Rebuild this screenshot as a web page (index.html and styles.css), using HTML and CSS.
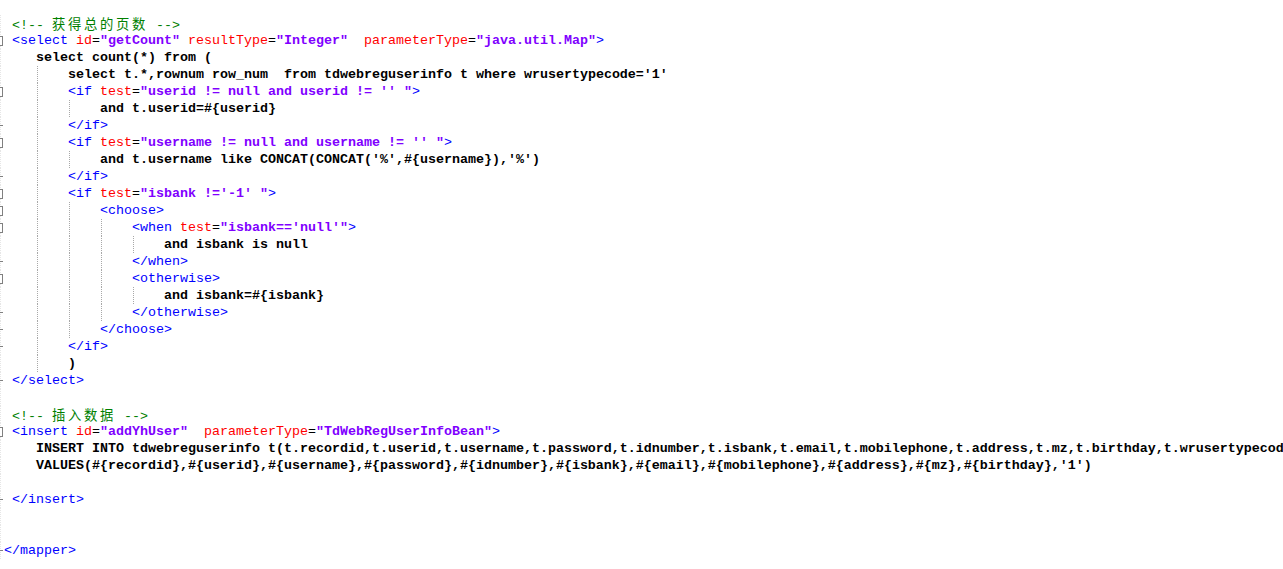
FILE: index.html
```html
<!DOCTYPE html>
<html>
<head>
<meta charset="utf-8">
<link rel="stylesheet" href="styles.css">
</head>
<body>
<div class="editor">
<div class="ln"><span class="fm"></span><span class="tx"> <span class="c">&lt;!-- <span class="cjk">获得总的页数</span> --&gt;</span></span></div>
<div class="ln"><span class="fm box"></span><span class="tx"> <span class="tg">&lt;select</span> <span class="at">id</span><span class="eq">=</span><span class="v">"getCount"</span> <span class="at">resultType</span><span class="eq">=</span><span class="v">"Integer"</span>  <span class="at">parameterType</span><span class="eq">=</span><span class="v">"java.util.Map"</span><span class="tg">&gt;</span></span></div>
<div class="ln"><span class="fm"></span><span class="tx"><span class="t"></span>select count(*) from (</span></div>
<div class="ln"><span class="fm"></span><span class="tx"><span class="t"></span><span class="t"></span>select t.*,rownum row_num  from tdwebreguserinfo t where wrusertypecode='1'</span></div>
<div class="ln"><span class="fm box"></span><span class="tx"><span class="t"></span><span class="t"></span><span class="tg">&lt;if</span> <span class="at">test</span><span class="eq">=</span><span class="v">"userid != null and userid != '' "</span><span class="tg">&gt;</span></span></div>
<div class="ln"><span class="fm"></span><span class="tx"><span class="t"></span><span class="t"></span><span class="t"></span>and t.userid=#{userid}</span></div>
<div class="ln"><span class="fm tick"></span><span class="tx"><span class="t"></span><span class="t"></span><span class="tg">&lt;/if&gt;</span></span></div>
<div class="ln"><span class="fm box"></span><span class="tx"><span class="t"></span><span class="t"></span><span class="tg">&lt;if</span> <span class="at">test</span><span class="eq">=</span><span class="v">"username != null and username != '' "</span><span class="tg">&gt;</span></span></div>
<div class="ln"><span class="fm"></span><span class="tx"><span class="t"></span><span class="t"></span><span class="t"></span>and t.username like CONCAT(CONCAT('%',#{username}),'%')</span></div>
<div class="ln"><span class="fm tick"></span><span class="tx"><span class="t"></span><span class="t"></span><span class="tg">&lt;/if&gt;</span></span></div>
<div class="ln"><span class="fm box"></span><span class="tx"><span class="t"></span><span class="t"></span><span class="tg">&lt;if</span> <span class="at">test</span><span class="eq">=</span><span class="v">"isbank !='-1' "</span><span class="tg">&gt;</span></span></div>
<div class="ln"><span class="fm box"></span><span class="tx"><span class="t"></span><span class="t"></span><span class="t"></span><span class="tg">&lt;choose&gt;</span></span></div>
<div class="ln"><span class="fm box"></span><span class="tx"><span class="t"></span><span class="t"></span><span class="t"></span><span class="t"></span><span class="tg">&lt;when</span> <span class="at">test</span><span class="eq">=</span><span class="v">"isbank=='null'"</span><span class="tg">&gt;</span></span></div>
<div class="ln"><span class="fm"></span><span class="tx"><span class="t"></span><span class="t"></span><span class="t"></span><span class="t"></span><span class="t"></span>and isbank is null</span></div>
<div class="ln"><span class="fm tick"></span><span class="tx"><span class="t"></span><span class="t"></span><span class="t"></span><span class="t"></span><span class="tg">&lt;/when&gt;</span></span></div>
<div class="ln"><span class="fm box"></span><span class="tx"><span class="t"></span><span class="t"></span><span class="t"></span><span class="t"></span><span class="tg">&lt;otherwise&gt;</span></span></div>
<div class="ln"><span class="fm"></span><span class="tx"><span class="t"></span><span class="t"></span><span class="t"></span><span class="t"></span><span class="t"></span>and isbank=#{isbank}</span></div>
<div class="ln"><span class="fm tick"></span><span class="tx"><span class="t"></span><span class="t"></span><span class="t"></span><span class="t"></span><span class="tg">&lt;/otherwise&gt;</span></span></div>
<div class="ln"><span class="fm tick"></span><span class="tx"><span class="t"></span><span class="t"></span><span class="t"></span><span class="tg">&lt;/choose&gt;</span></span></div>
<div class="ln"><span class="fm tick"></span><span class="tx"><span class="t"></span><span class="t"></span><span class="tg">&lt;/if&gt;</span></span></div>
<div class="ln"><span class="fm"></span><span class="tx"><span class="t"></span><span class="t"></span>)</span></div>
<div class="ln"><span class="fm tick"></span><span class="tx"> <span class="tg">&lt;/select&gt;</span></span></div>
<div class="ln"><span class="fm"></span><span class="tx"></span></div>
<div class="ln"><span class="fm"></span><span class="tx"> <span class="c">&lt;!-- <span class="cjk">插入数据</span> --&gt;</span></span></div>
<div class="ln"><span class="fm box"></span><span class="tx"> <span class="tg">&lt;insert</span> <span class="at">id</span><span class="eq">=</span><span class="v">"addYhUser"</span>  <span class="at">parameterType</span><span class="eq">=</span><span class="v">"TdWebRegUserInfoBean"</span><span class="tg">&gt;</span></span></div>
<div class="ln"><span class="fm"></span><span class="tx"><span class="t"></span>INSERT INTO tdwebreguserinfo t(t.recordid,t.userid,t.username,t.password,t.idnumber,t.isbank,t.email,t.mobilephone,t.address,t.mz,t.birthday,t.wrusertypecode)</span></div>
<div class="ln"><span class="fm"></span><span class="tx"><span class="t"></span>VALUES(#{recordid},#{userid},#{username},#{password},#{idnumber},#{isbank},#{email},#{mobilephone},#{address},#{mz},#{birthday},'1')</span></div>
<div class="ln"><span class="fm"></span><span class="tx"></span></div>
<div class="ln"><span class="fm tick"></span><span class="tx"> <span class="tg">&lt;/insert&gt;</span></span></div>
<div class="ln"><span class="fm"></span><span class="tx"></span></div>
<div class="ln"><span class="fm"></span><span class="tx"></span></div>
<div class="ln"><span class="fm tick"></span><span class="tx"><span class="tg">&lt;/mapper&gt;</span></span></div>
</div>
</body>
</html>
```
FILE: styles.css
```css
html, body {
  margin: 0;
  padding: 0;
  background: #ffffff;
  overflow: hidden;
}

.editor {
  width: 1283px;
  height: 569px;
  overflow: hidden;
  padding-top: 15px;
  box-sizing: border-box;
  font-family: "Liberation Mono", "Courier New", monospace;
  font-size: 13.333px;
  font-weight: bold;
  color: #000000;
}

.ln {
  display: flex;
  height: 17px;
  line-height: 17px;
}

.fm {
  flex: none;
  position: relative;
  width: 4px;
  height: 17px;
  background: repeating-linear-gradient(to bottom, #e6e6e6 0 1px, #ffffff 1px 2px) 0 0 / 1px 100% no-repeat;
}

.fm.box::after {
  content: "";
  position: absolute;
  left: 0;
  top: 4px;
  width: 2px;
  height: 8px;
  border: 1px solid #808080;
  border-left: none;
  background: #ffffff;
}

.fm.tick::after {
  content: "";
  position: absolute;
  left: 0;
  top: 8px;
  width: 3px;
  height: 1px;
  background: #808080;
}

.tx {
  white-space: pre;
}

.t {
  display: inline-block;
  width: 32px;
  height: 17px;
  vertical-align: top;
}

.t + .t {
  background-image: linear-gradient(to bottom, #a8a8a8 50%, transparent 50%);
  background-size: 1px 2px;
  background-position: 1px 0;
  background-repeat: repeat-y;
}

.c {
  color: #008000;
  font-weight: normal;
}

.cjk {
  font-family: "Noto Sans CJK SC", sans-serif;
  letter-spacing: 2.667px;
}

.tg {
  color: #0000ff;
  font-weight: normal;
}

.at {
  color: #ff0000;
  font-weight: normal;
}

.eq {
  color: #000000;
  font-weight: normal;
}

.v {
  color: #8000ff;
  font-weight: bold;
}
```
